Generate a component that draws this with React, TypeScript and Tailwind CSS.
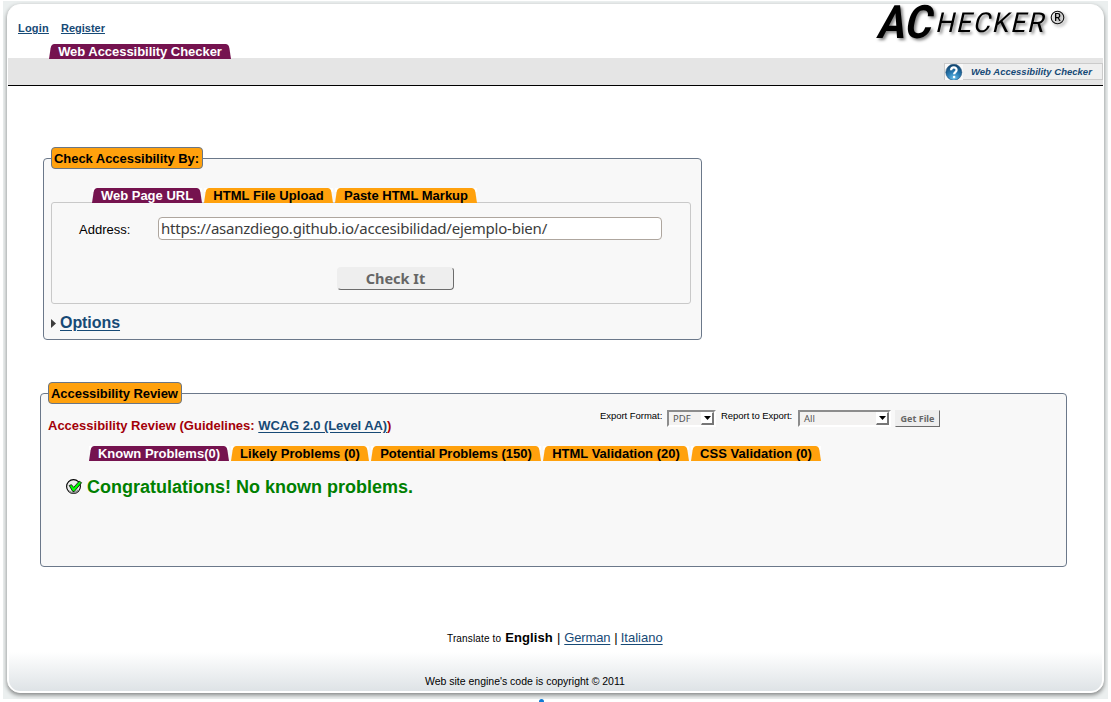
import React from "react";

function Tab({ label, width, active = false, spacing = "" }: { label: string; width: string; active?: boolean; spacing?: string }) {
  const fill = active ? "#75134f" : "#ffa10d";
  return (
    <div className={`flex h-[15px] shrink-0 ${width}`}>
      <svg width="8" height="15" viewBox="0 0 8 15" className="shrink-0">
        <rect width="8" height="4" fill="#fff" />
        <path d="M0 15 L1.6 4.2 Q2.4 0 5.4 0 L8 0 L8 15Z" fill={fill} />
      </svg>
      <div
        className={`h-[15px] flex-1 text-center text-[13px] leading-[15px] font-bold whitespace-nowrap ${spacing} ${active ? "bg-[#75134f] text-white" : "bg-[#ffa10d] text-black"}`}
      >
        {label}
      </div>
      <svg width="8" height="15" viewBox="0 0 8 15" className="shrink-0">
        <rect width="8" height="4" fill="#fff" />
        <path d="M8 15 L6.4 4.2 Q5.6 0 2.6 0 L0 0 L0 15Z" fill={fill} />
      </svg>
    </div>
  );
}

function Legend({ label, width }: { label: string; width: string }) {
  return (
    <div className={`-mt-[12px] ml-[7px] h-[22px] shrink-0 rounded-[4px] border border-[#6a7685] bg-[#ffa10d] pl-[2px] text-[13px] leading-[21px] font-bold tracking-[-0.05px] whitespace-nowrap ${width}`}>
      {label}
    </div>
  );
}

function Select({ label, width }: { label: string; width: string }) {
  return (
    <div className={`flex h-[17px] shrink-0 justify-between border-t-2 border-r-2 border-b-2 border-l-2 border-t-[#8c8c8c] border-r-white border-b-white border-l-[#8c8c8c] bg-[#f3f2f1] pl-[4px] ${width}`}>
      <span className="font-['Noto_Sans',sans-serif] text-[9.5px] leading-[14px] text-[#555]">{label}</span>
      <div className="flex h-[13px] w-[13px] items-center justify-center border-t border-r-2 border-b-2 border-l border-t-white border-r-[#777] border-b-[#777] border-l-white bg-white">
        <svg width="7" height="4" viewBox="0 0 7 4">
          <path d="M0 0H7L3.5 4Z" fill="#000" />
        </svg>
      </div>
    </div>
  );
}

function Logo() {
  return (
    <svg width="196" height="44" viewBox="872 0 196 44" className="overflow-visible drop-shadow-[2px_2px_1.5px_rgba(0,0,0,0.5)]">
      <g fontFamily="Roboto, 'Liberation Sans', sans-serif" fill="#000">
        <text transform="translate(876 37.5) skewX(-13)" fontSize="46" fontWeight="700" textLength="54" lengthAdjust="spacingAndGlyphs">AC</text>
        <text transform="translate(935 32) skewX(-13)" fontSize="27.5" fontWeight="400" textLength="110" lengthAdjust="spacingAndGlyphs" letterSpacing="2">HECKER</text>
        <text x="1057.5" y="21.3" fontSize="10.5" fontWeight="500" textAnchor="middle">R</text>
      </g>
      <circle cx="1057.5" cy="17.5" r="6.3" fill="none" stroke="#111" strokeWidth="1.1" />
    </svg>
  );
}

function HelpIcon() {
  return (
    <svg width="18" height="16" viewBox="0 0 18 16" className="shrink-0">
      <defs>
        <radialGradient id="help-fill" cx="50%" cy="90%" r="90%">
          <stop offset="0" stopColor="#6fc3ec" />
          <stop offset="0.45" stopColor="#2a7db5" />
          <stop offset="1" stopColor="#0e3f68" />
        </radialGradient>
      </defs>
      <rect width="18" height="16" fill="#f8f8f8" />
      <circle cx="8.8" cy="8.3" r="8" fill="url(#help-fill)" stroke="#1c4e77" strokeWidth="0.6" />
      <path d="M6.1 6.3C6.1 2.5 11.6 2.6 11.6 6C11.6 8.2 9.1 8 9.1 10.3" fill="none" stroke="#fff" strokeWidth="2.2" />
      <circle cx="9.1" cy="13" r="1.3" fill="#fff" />
    </svg>
  );
}

function CheckIcon() {
  return (
    <svg width="17" height="17" viewBox="0 0 17 17" className="shrink-0">
      <circle cx="7.5" cy="7.5" r="6.9" fill="#ececec" stroke="#000" strokeWidth="1.1" />
      <path d="M3 12Q8 16 12.5 11" stroke="#888" strokeWidth="1.6" fill="none" />
      <path d="M3.2 6.5L5.5 5.7L7.7 8.4L13.2 2.2L15.6 3.7L8.2 12.6L6.7 12.4Z" fill="#0f0" stroke="#000" strokeWidth="0.8" />
    </svg>
  );
}

export default function App() {
  return (
    <div className="relative flex h-[702px] w-[1111px] overflow-hidden bg-white pt-[1px] pl-[3px] font-['Liberation_Sans',Arial,sans-serif] text-[13px] text-black">
      <div className="flex h-[698px] w-[1105px] shrink-0 bg-[#ebefef] pt-[3px] pl-[4px]">
        <div className="flex h-[689px] w-[1097px] shrink-0 flex-col rounded-[13px] border border-white bg-white shadow-[0_2px_4px_rgba(0,0,0,0.45)]">
          <header className="flex h-[53px] shrink-0 justify-between">
            <div className="flex flex-col">
              <nav className="mt-[16px] ml-[10px] flex h-[14px] gap-[12px] text-[11px] leading-[14px] font-bold text-[#174a76]">
                <a className="tracking-[0.2px] underline underline-offset-1">Login</a>
                <a className="underline underline-offset-1">Register</a>
              </nav>
              <div className="relative z-10 mt-[9px] ml-[41px] flex">
                <Tab label="Web Accessibility Checker" width="w-[182px]" active spacing="tracking-[-0.04px]" />
              </div>
            </div>
            <div className="-mt-[5px] mr-[35px]">
              <Logo />
            </div>
          </header>
          <div className="flex h-[28px] shrink-0 items-start justify-end border-b border-black bg-[#e5e5e5] pt-[5px]">
            <div className="flex h-[17px] w-[159px] items-start border border-[#cbcbcb] bg-[#efefef]">
              <HelpIcon />
              <span className="ml-[8px] text-[9.5px] leading-[16px] font-bold tracking-[0.02px] whitespace-nowrap text-[#174a76] italic">Web Accessibility Checker</span>
            </div>
          </div>

          <section className="mt-[72px] ml-[35px] flex h-[182px] w-[659px] shrink-0 flex-col rounded-[4px] border border-[#6b788a] bg-[#f8f8f8]">
            <Legend label="Check Accessibility By:" width="w-[152px]" />
            <div className="relative z-10 mt-[19px] ml-[48px] flex h-[15px] gap-[2px]">
              <Tab label="Web Page URL" width="w-[110px]" active />
              <Tab label="HTML File Upload" width="w-[129px]" spacing="tracking-[0.07px]" />
              <Tab label="Paste HTML Markup" width="w-[142px]" />
            </div>
            <div className="-mt-px ml-[7px] flex h-[102px] w-[640px] shrink-0 flex-col rounded-[3px] border border-[#c9c9c9]">
              <div className="mt-[14px] ml-[27px] flex items-center">
                <label className="w-[79px] pt-[2px]">Address:</label>
                <div className="h-[23px] w-[504px] rounded-[4px] border border-[#aea69e] bg-white pl-[2px] font-['Noto_Sans',sans-serif] text-[15px] leading-[21px] tracking-[-0.224px] whitespace-nowrap text-[#3c3c3c]">
                  https://asanzdiego.github.io/accesibilidad/ejemplo-bien/
                </div>
              </div>
              <button className="mt-[27px] ml-[285px] h-[23px] w-[117px] rounded-[4px] border border-t-[#eee] border-r-[#6c6c6c] border-b-[#6c6c6c] border-l-[#eee] bg-[#eee] font-['Noto_Sans',sans-serif] text-[14.5px] leading-[21px] font-bold text-[#666]">
                Check It
              </button>
            </div>
            <div className="mt-[9px] ml-[7px] flex items-center">
              <svg width="5" height="9" viewBox="0 0 5 9" className="mt-[2px]">
                <path d="M0 0L5 4.5L0 9Z" fill="#3c3c3c" />
              </svg>
              <a className="ml-[4px] text-[16px] leading-[19px] font-bold tracking-[-0.06px] text-[#174a76] underline underline-offset-2">Options</a>
            </div>
          </section>

          <section className="mt-[53px] ml-[32px] flex h-[174px] w-[1027px] shrink-0 flex-col rounded-[4px] border border-[#6b788a] bg-[#f8f8f8]">
            <Legend label="Accessibility Review" width="w-[134px]" />
            <div className="mt-[6px] flex h-[26px] items-start">
              <h2 className="mt-[8px] ml-[7px] w-[552px] leading-[16px] font-bold whitespace-nowrap text-[#a30008]">
                Accessibility Review (Guidelines:{" "}
                <a className="tracking-[-0.08px] text-[#174a76] underline underline-offset-2">WCAG 2.0 (Level AA)</a>)
              </h2>
              <span className="w-[67px] text-[9.5px] leading-[12px] tracking-[-0.04px] whitespace-nowrap">Export Format:</span>
              <Select label="PDF" width="w-[49px]" />
              <span className="ml-[5px] w-[77px] text-[9.5px] leading-[12px] tracking-[-0.04px] whitespace-nowrap">Report to Export:</span>
              <Select label="All" width="w-[93px]" />
              <button className="ml-[4px] h-[17px] w-[45px] border border-t-[#eee] border-r-[#6c6c6c] border-b-[#6c6c6c] border-l-[#eee] bg-[#eee] font-['Noto_Sans',sans-serif] text-[9px] leading-[15px] font-bold whitespace-nowrap text-[#666]">
                Get File
              </button>
            </div>
            <div className="mt-[10px] ml-[48px] flex h-[15px] gap-[2px]">
              <Tab label="Known Problems(0)" width="w-[140px]" active />
              <Tab label="Likely Problems (0)" width="w-[138px]" spacing="tracking-[0.04px]" />
              <Tab label="Potential Problems (150)" width="w-[170px]" />
              <Tab label="HTML Validation (20)" width="w-[146px]" />
              <Tab label="CSS Validation (0)" width="w-[130px]" spacing="tracking-[0.04px]" />
            </div>
            <div className="mt-[15px] ml-[25px] flex items-center">
              <CheckIcon />
              <span className="ml-[4px] text-[18px] leading-[22px] font-bold text-[#008000]">Congratulations! No known problems.</span>
            </div>
          </section>

          <div className="mt-[62px] flex h-[18px] shrink-0 items-baseline gap-[4px] pl-[439px] leading-[18px] whitespace-nowrap">
            <span className="text-[10px] tracking-[0.15px]">Translate to</span>
            <span className="font-bold tracking-[0.1px]">English</span>
            <span>|</span>
            <a className="tracking-[-0.15px] text-[#174a76] underline underline-offset-2">German</a>
            <span>|</span>
            <a className="-ml-px text-[#174a76] underline underline-offset-2">Italiano</a>
          </div>
          <footer className="mx-px mt-[5px] mb-px flex flex-1 items-start rounded-b-[11px] bg-linear-to-b from-white to-[#dee3e6] pt-[21px] pl-[416px]">
            <span className="text-[10.5px] leading-[16px] tracking-[-0.01px] whitespace-nowrap">Web site engine's code is copyright © 2011</span>
          </footer>
        </div>
      </div>
      <div className="absolute top-[699px] left-[539px] h-[5px] w-[5px] rounded-full bg-[#0f7ad6]" />
    </div>
  );
}
